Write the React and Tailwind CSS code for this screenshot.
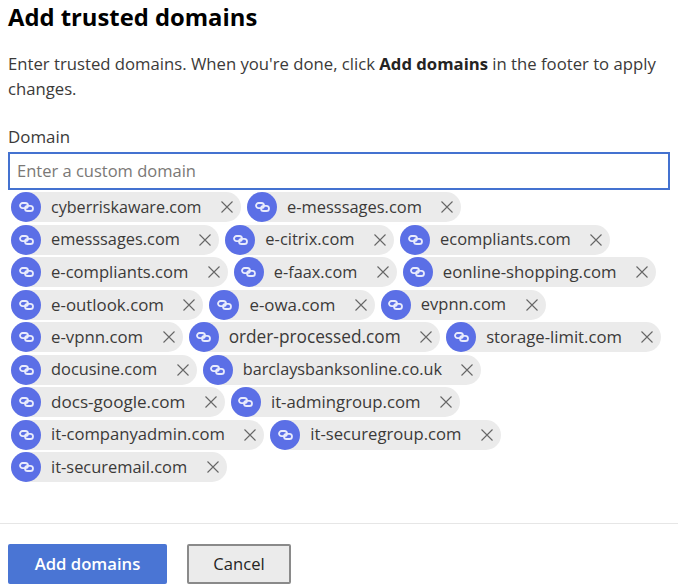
// per-chip text size, the domains in the reference are not all the same width
const rows = [
  [["cyberriskaware.com", "text-[16.1px]"], ["e-messsages.com", "text-[16.45px]"]],
  [["emesssages.com", "text-[16.35px]"], ["e-citrix.com", "text-[16.45px]"], ["ecompliants.com", "text-[16.45px]"]],
  [["e-compliants.com", "text-[16.6px]"], ["e-faax.com", "text-[16.3px]"], ["eonline-shopping.com", "text-[16.75px]"]],
  [["e-outlook.com", "text-[16.85px]"], ["e-owa.com", "text-[16.9px]"], ["evpnn.com", "text-[16.5px]"]],
  [["e-vpnn.com", "text-[16.8px]"], ["order-processed.com", "text-[17.25px]"], ["storage-limit.com", "text-[16.7px]"]],
  [["docusine.com", "text-[16.4px]"], ["barclaysbanksonline.co.uk", "text-[16.25px]"]],
  [["docs-google.com", "text-[17.1px]"], ["it-admingroup.com", "text-[16.75px]"]],
  [["it-companyadmin.com", "text-[16.65px]"], ["it-securegroup.com", "text-[16.65px]"]],
  [["it-securemail.com", "text-[16.45px]"]],
];

function LinkIcon() {
  return (
    <svg width="15" height="10" viewBox="0 0 15 10" fill="none" stroke="#e8ebfc" strokeWidth="1.8">
      <rect x="1" y="1" width="8" height="5.2" rx="2.6" />
      <rect x="6" y="3.8" width="8" height="5.2" rx="2.6" />
    </svg>
  );
}

function Chip({ name, size }) {
  return (
    <div className="flex items-center h-[30px] rounded-full bg-[#ebebeb]">
      <div className="w-[30px] h-[30px] rounded-full bg-[#5b6fe6] flex items-center justify-center">
        <LinkIcon />
      </div>
      <span className={`ml-[10px] ${size} text-[#3b3a39] whitespace-nowrap`}>{name}</span>
      <svg className="ml-[19.5px] mr-[8px]" width="12" height="12" viewBox="0 0 12 12" stroke="#666" strokeWidth="1.1">
        <path d="M0.5 0.5L11.5 11.5M11.5 0.5L0.5 11.5" />
      </svg>
    </div>
  );
}

export default function App() {
  return (
    <div className="w-[678px] h-[588px] bg-white overflow-hidden font-['Open_Sans','Noto_Sans',sans-serif]">
      <div className="px-2">
        <h1 className="text-[23.8px] font-bold text-black leading-[34px]">Add trusted domains</h1>
        <p className="mt-[16.5px] text-[16.7px] text-[#3b3a39] leading-[25px] w-[662px]">
          Enter trusted domains. When you're done, click <b className="text-[#252423]">Add domains</b> in the footer to apply changes.
        </p>
        <div className="mt-[26.5px] text-[16.9px] text-[#3b3a39] leading-[20px]">Domain</div>
        <input
          className="mt-[4.5px] block w-[662px] h-[38px] border-2 border-[#4472d0] px-[7px] text-[16.5px] outline-none placeholder:text-[#7a7876]"
          placeholder="Enter a custom domain"
        />
      </div>
      <div className="mt-[2.5px] pl-[11px] flex flex-col gap-[2.5px]">
        {rows.map((row, i) => (
          <div key={i} className="flex gap-[6px]">
            {row.map(([name, size]) => <Chip key={name} name={name} size={size} />)}
          </div>
        ))}
      </div>
      <div className="mt-[40.5px] border-t border-[#e6e6e6] px-2 pt-[20px] flex gap-[20px]">
        <button className="w-[159px] h-[40px] rounded-[2px] bg-[#4a75d4] text-white text-[16.7px] font-semibold">Add domains</button>
        <button className="w-[104px] h-[40px] rounded-[2px] bg-[#ebebeb] border-2 border-[#8a8a8a] pt-[1px] text-[#252423] text-[16.6px] font-medium">Cancel</button>
      </div>
    </div>
  );
}
